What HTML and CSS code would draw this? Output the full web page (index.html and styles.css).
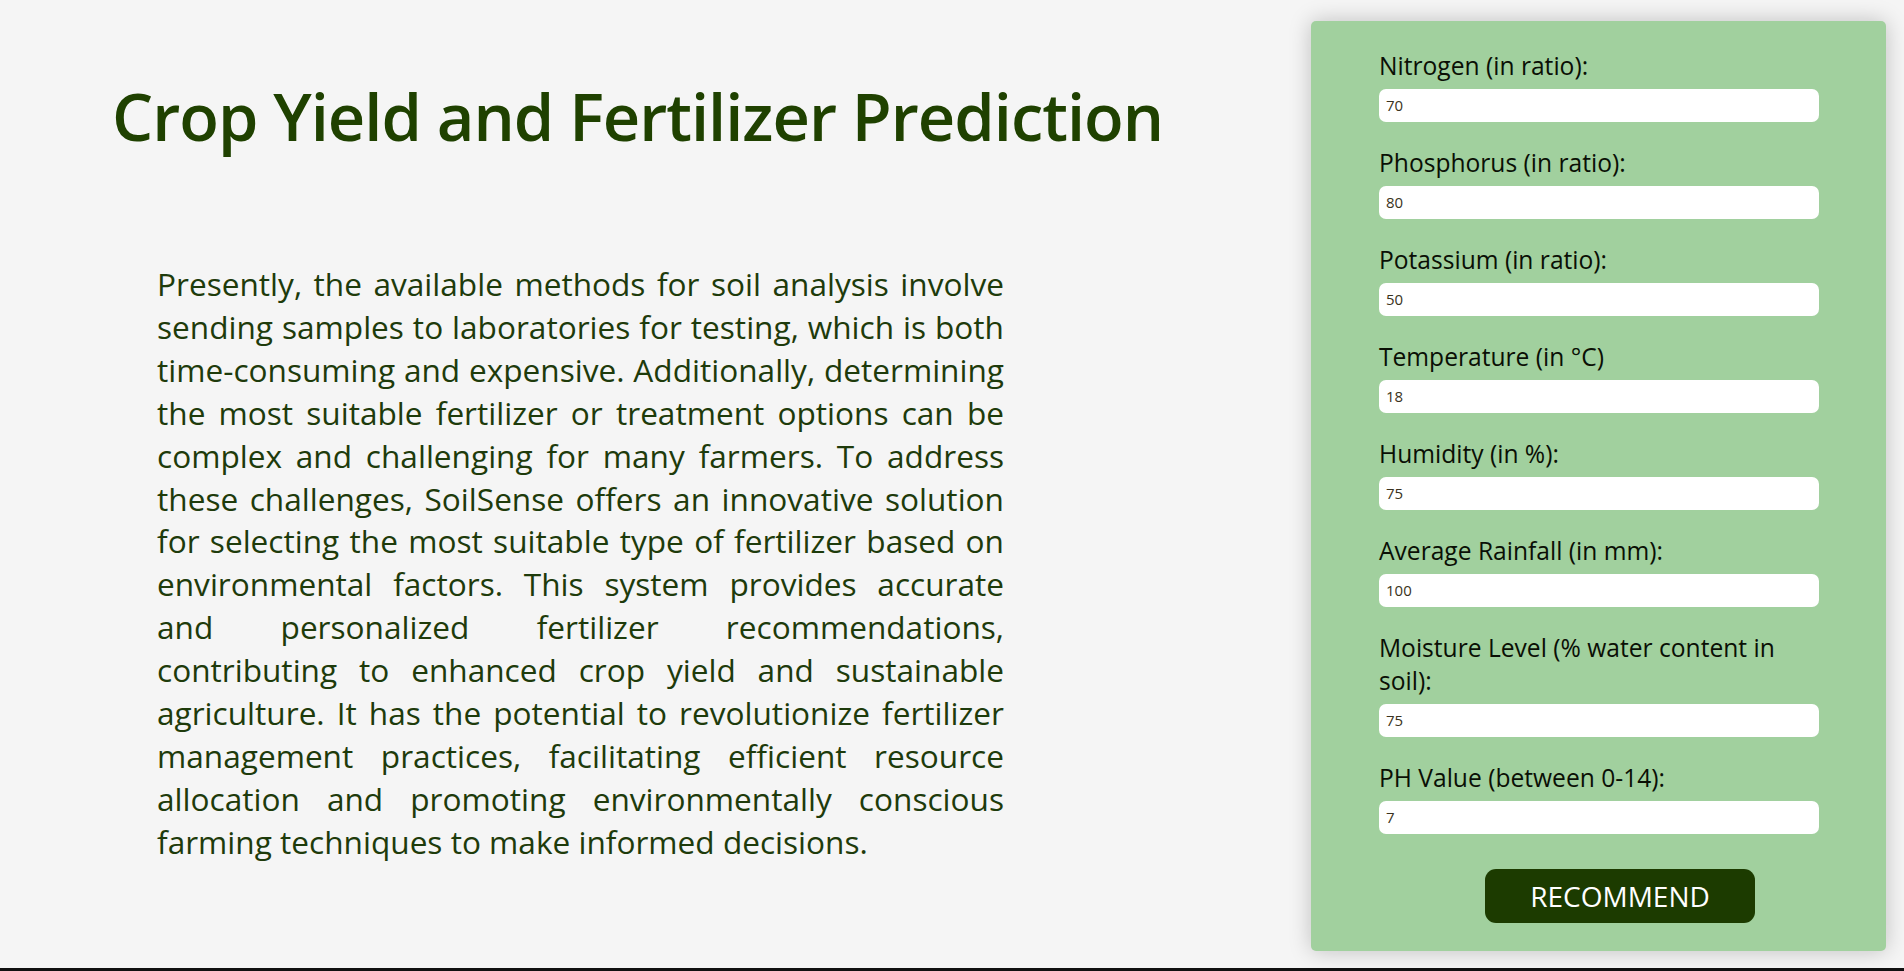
FILE: index.html
```html
<!DOCTYPE html>
<html lang="en">
<head>
<meta charset="utf-8">
<title>Crop Yield and Fertilizer Prediction</title>
<link rel="stylesheet" href="styles.css">
</head>
<body>
<div class="page">
  <section class="intro">
    <h1 class="title">Crop Yield and Fertilizer Prediction</h1>
    <p class="about">
      <span class="line">Presently, the available methods for soil analysis involve</span>
      <span class="line">sending samples to laboratories for testing, which is both</span>
      <span class="line">time-consuming and expensive. Additionally, determining</span>
      <span class="line">the most suitable fertilizer or treatment options can be</span>
      <span class="line">complex and challenging for many farmers. To address</span>
      <span class="line">these challenges, SoilSense offers an innovative solution</span>
      <span class="line">for selecting the most suitable type of fertilizer based on</span>
      <span class="line">environmental factors. This system provides accurate</span>
      <span class="line">and personalized fertilizer recommendations,</span>
      <span class="line">contributing to enhanced crop yield and sustainable</span>
      <span class="line">agriculture. It has the potential to revolutionize fertilizer</span>
      <span class="line">management practices, facilitating efficient resource</span>
      <span class="line">allocation and promoting environmentally conscious</span>
      <span class="line">farming techniques to make informed decisions.</span>
    </p>
  </section>
  <form class="panel">
    <div class="field">
      <label class="label" for="n">Nitrogen (in ratio):</label>
      <input class="input" id="n" type="text" value="70">
    </div>
    <div class="field">
      <label class="label" for="p">Phosphorus (in ratio):</label>
      <input class="input" id="p" type="text" value="80">
    </div>
    <div class="field">
      <label class="label" for="k">Potassium (in ratio):</label>
      <input class="input" id="k" type="text" value="50">
    </div>
    <div class="field">
      <label class="label" for="t">Temperature (in °C)</label>
      <input class="input" id="t" type="text" value="18">
    </div>
    <div class="field">
      <label class="label" for="h">Humidity (in %):</label>
      <input class="input" id="h" type="text" value="75">
    </div>
    <div class="field">
      <label class="label" for="r">Average Rainfall (in mm):</label>
      <input class="input" id="r" type="text" value="100">
    </div>
    <div class="field">
      <label class="label" for="m">Moisture Level (% water content in soil):</label>
      <input class="input" id="m" type="text" value="75">
    </div>
    <div class="field">
      <label class="label" for="ph">PH Value (between 0-14):</label>
      <input class="input" id="ph" type="text" value="7">
    </div>
    <button class="btn" type="button">RECOMMEND</button>
  </form>
</div>
<div class="footer-line"></div>
</body>
</html>
```

FILE: styles.css
```css
* { box-sizing: border-box; }

html, body {
  margin: 0;
  padding: 0;
  background: #f5f5f5;
  font-family: "Open Sans", "Noto Sans", sans-serif;
}

.page {
  display: flex;
  justify-content: space-between;
  align-items: flex-start;
  height: 968px;
}

.intro {
  flex: 1;
  padding-left: 112px;
}

.title {
  margin: 72px 0 0;
  font-size: 65px;
  font-weight: 600;
  line-height: normal;
  letter-spacing: -1px;
  color: #1f4100;
  white-space: nowrap;
}

.about {
  margin: 103px 0 0 45px;
  width: 847px;
  font-size: 31.6px;
  line-height: 42.9px;
  color: #1e3b0b;
}

.line {
  display: block;
  white-space: nowrap;
  text-align: justify;
  text-align-last: justify;
}

.line:last-child {
  text-align-last: left;
}

.panel {
  width: 575px;
  margin: 21px 18px 0 0;
  padding: 27.7px 67px 27.5px 68px;
  background: #a1d09e;
  border-radius: 5px;
  box-shadow: 0 0 22px rgba(0, 0, 0, 0.22);
  display: flex;
  flex-direction: column;
}

.field {
  display: flex;
  flex-direction: column;
  margin-bottom: 24.1px;
}

.label {
  font-size: 24.6px;
  line-height: 33.5px;
  color: #0a0f05;
  margin-bottom: 6.4px;
}

.input {
  height: 33px;
  border: none;
  border-radius: 7px;
  background: #fff;
  padding: 0 7px;
  font-family: "Open Sans", "Noto Sans", sans-serif;
  font-size: 15px;
  color: #3a3320;
  outline: none;
}

.btn {
  align-self: flex-start;
  margin: 11.4px 0 0 106px;
  width: 270px;
  height: 54px;
  border: none;
  border-radius: 11px;
  background: #1c3b00;
  color: #fff;
  font-family: "Open Sans", "Noto Sans", sans-serif;
  font-size: 28px;
  cursor: pointer;
}

.footer-line {
  height: 30px;
  background: #111;
}
```
